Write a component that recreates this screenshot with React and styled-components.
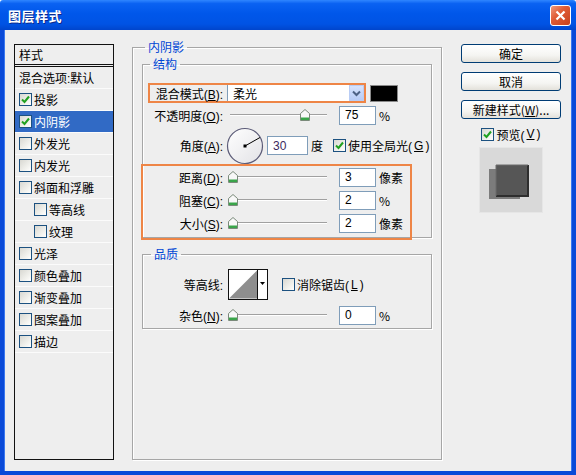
import styled, { createGlobalStyle } from 'styled-components';

const GlobalStyle = createGlobalStyle`
  html, body { margin: 0; padding: 0; background: #ffffff; }
  body {
    font-family: "Liberation Sans", "Noto Sans CJK SC", sans-serif;
    font-size: 12px;
    color: #000;
  }
  * { box-sizing: border-box; }
`;

const Window = styled.div`
  width: 576px;
  height: 475px;
  display: flex;
  flex-direction: column;
`;

const TitleBar = styled.div`
  height: 30px;
  flex: none;
  display: flex;
  align-items: center;
  justify-content: space-between;
  padding: 0 5px 0 8px;
  border-radius: 3px 3px 0 0;
  background: linear-gradient(to bottom, #2f86ff 0%, #0a62f2 12%, #0057ea 45%, #0053e4 80%, #0045cc 100%);
`;

const Title = styled.span`
  color: #fff;
  font-family: "Noto Sans CJK SC", sans-serif;
  font-weight: bold;
  font-size: 13px;
  text-shadow: 1px 1px 0 #0b2a8c;
  letter-spacing: 0.5px;
`;

const CloseButton = styled.div`
  width: 21px;
  height: 21px;
  border: 1px solid #fff;
  border-radius: 3px;
  background: linear-gradient(135deg, #f09a7e 0%, #e05c36 40%, #c7401c 100%);
  display: flex;
  align-items: center;
  justify-content: center;
`;

const Body = styled.div`
  flex: 1;
  display: flex;
  align-items: flex-start;
  padding: 14px 11px 0 10px;
  background: #eeeeee;
  border: 4px solid #0a4ad8;
  border-top: none;
  box-shadow: inset 1px 0 0 #3a78f0, inset -1px 0 0 #3a78f0;
`;

const StyleList = styled.div`
  width: 100px;
  height: 416px;
  flex: none;
  border: 1px solid #111;
`;

const ListHeader = styled.div`
  height: 22px;
  padding-left: 4px;
  display: flex;
  align-items: center;
  border-bottom: 3px double #111;
`;

const ListItem = styled.div`
  height: 22px;
  display: flex;
  align-items: center;
  gap: 2px;
  padding-left: ${p => (p.$indent ? 19 : 4)}px;
  border-bottom: 1px solid #fbfbfb;
  background: ${p => (p.$selected ? '#316ac5' : 'transparent')};
  color: ${p => (p.$selected ? '#fff' : '#000')};
`;

const Box = styled.span`
  width: 13px;
  height: 13px;
  flex: none;
  border: 1px solid #1c5180;
  background: linear-gradient(135deg, #d8d8d2 0%, #f4f4f0 70%, #ffffff 100%);
  display: inline-flex;
  align-items: center;
  justify-content: center;
`;

const Group = styled.fieldset`
  margin: ${p => p.$mt || 0}px 0 0 ${p => p.$ml || 0}px;
  padding: ${p => p.$pad};
  width: ${p => p.$w}px;
  height: ${p => (p.$h ? `${p.$h}px` : 'auto')};
  flex: none;
  border: 1px solid #a6a6a6;
  box-shadow: 1px 1px 0 #ffffff, inset 1px 1px 0 #ffffff;
  min-inline-size: 0;
`;

const Legend = styled.legend`
  margin-left: ${p => p.$ml}px;
  padding: 0 3px;
  line-height: 14px;
  color: #0046d5;
  font-family: "Noto Sans CJK SC", sans-serif;
`;

const Row = styled.div`
  display: flex;
  align-items: center;
  height: ${p => p.$h || 20}px;
  margin-top: ${p => p.$mt || 0}px;
`;

const Label = styled.span`
  width: ${p => p.$w || 80}px;
  flex: none;
  text-align: right;
  white-space: nowrap;
`;

const BlendFrame = styled.div`
  margin-left: 5px;
  width: 218px;
  height: 20px;
  border: 2px solid #ee8546;
  display: flex;
  align-items: center;
`;

const Select = styled.div`
  margin-left: 4px;
  flex: 1;
  height: 16px;
  background: #fff;
  border-left: 1px solid #7f9db9;
  display: flex;
  align-items: center;
  justify-content: space-between;
  padding-left: 5px;
  font-family: "Noto Sans CJK SC", sans-serif;
`;

const DropButton = styled.span`
  width: 15px;
  height: 16px;
  background: linear-gradient(to bottom, #d7e3fd, #b7cbf6);
  border: 1px solid #b9cdf5;
  display: flex;
  align-items: center;
  justify-content: center;
`;

const ColorSwatch = styled.div`
  margin-left: 4px;
  width: 28px;
  height: 17px;
  background: #000;
  border: 1px solid #8a8a8a;
`;

const SliderWrap = styled.div`
  position: relative;
  margin-left: 5px;
  width: 100px;
  height: 20px;
  flex: none;
  &::before {
    content: '';
    position: absolute;
    left: 2px;
    right: 1px;
    top: 9px;
    height: 1px;
    background: #a0a0a0;
    box-shadow: 0 1px 0 #ffffff;
  }
`;

const Thumb = styled.svg`
  position: absolute;
  top: 4px;
`;

const NumInput = styled.div`
  margin-left: ${p => p.$ml || 11}px;
  width: ${p => p.$w || 37}px;
  height: 19px;
  flex: none;
  background: #fff;
  border: 1px solid #7f9db9;
  padding-left: 5px;
  display: flex;
  align-items: center;
  color: ${p => p.$color || '#000'};
`;

const Unit = styled.span`
  margin-left: ${p => p.$ml || 3}px;
  font-family: "Noto Sans CJK SC", sans-serif;
`;

const CheckLabel = styled.span`
  display: inline-flex;
  align-items: center;
  gap: 2px;
  margin-left: ${p => p.$ml || 0}px;
  white-space: nowrap;
`;

const HighlightBox = styled.div`
  margin: 0 0 -3px -2px;
  width: 271px;
  border: 2px solid #ee8546;
  padding: 1px 0 5px;
  display: flex;
  flex-direction: column;
  gap: 3px;
  position: relative;
`;

const ContourBox = styled.div`
  margin-left: 5px;
  width: 40px;
  height: 31px;
  flex: none;
  border: 1px solid #111;
  background: #fff;
  display: flex;
`;

const SideColumn = styled.div`
  width: 100px;
  flex: none;
  margin-left: 19px;
  display: flex;
  flex-direction: column;
  align-items: center;
`;

const Button = styled.div`
  width: 100px;
  height: 19px;
  margin-bottom: 9px;
  border: 1px solid #003c74;
  border-radius: 3px;
  background: linear-gradient(to bottom, #ffffff 0%, #f5f5f2 60%, #e3e1da 100%);
  display: flex;
  align-items: center;
  justify-content: center;
  font-family: "Noto Sans CJK SC", sans-serif;
  white-space: nowrap;
`;

const PreviewRow = styled.div`
  margin-top: -1px;
  height: 14px;
  display: flex;
  align-items: center;
`;

const Preview = styled.div`
  margin-top: 6px;
  width: 64px;
  height: 66px;
  background: #d9d9d9;
  border: 1px solid #e6e6e6;
  display: flex;
  align-items: center;
  justify-content: center;
`;

const Check = ({ checked }) => (
  <Box>
    {checked && (
      <svg width="9" height="9" viewBox="0 0 9 9">
        <path d="M1 4.5 L3.5 7 L8 1.5" fill="none" stroke="#21a121" strokeWidth="2" />
      </svg>
    )}
  </Box>
);

const Slider = ({ value }) => (
  <SliderWrap>
    <Thumb width="10" height="12" viewBox="0 0 10 12" style={{ left: value * 96 }}>
      <path d="M0.5 4.5 L5 0.5 L9.5 4.5 V11.5 H0.5 Z" fill="#f8f8f8" stroke="#7a8a7a" />
      <rect x="1" y="8.5" width="8" height="2.5" fill="#3aa54a" />
    </Thumb>
  </SliderWrap>
);

// access key like "(B)", optionally followed by a colon
const Key = ({ k, colon = true }) => (
  <>
    (<u>{k}</u>){colon ? ':' : ''}
  </>
);

const Dial = () => (
  <svg width="38" height="38" viewBox="0 0 38 38" style={{ marginLeft: 3, flex: 'none' }}>
    <defs>
      <linearGradient id="dg" x1="0" y1="0" x2="1" y2="1">
        <stop offset="0" stopColor="#ffffff" />
        <stop offset="1" stopColor="#e2e2e6" />
      </linearGradient>
    </defs>
    <circle cx="19" cy="19" r="17.5" fill="url(#dg)" stroke="#5c5c78" strokeWidth="1.2" />
    <line x1="19" y1="19" x2="34" y2="10.5" stroke="#000" strokeWidth="1" />
    <rect x="17.5" y="17.5" width="3" height="3" fill="#000" />
  </svg>
);

const items = [
  { label: '混合选项:默认', box: false },
  { label: '投影', box: true, checked: true },
  { label: '内阴影', box: true, checked: true, selected: true },
  { label: '外发光', box: true },
  { label: '内发光', box: true },
  { label: '斜面和浮雕', box: true },
  { label: '等高线', box: true, indent: true },
  { label: '纹理', box: true, indent: true },
  { label: '光泽', box: true },
  { label: '颜色叠加', box: true },
  { label: '渐变叠加', box: true },
  { label: '图案叠加', box: true },
  { label: '描边', box: true },
];

export default function App() {
  return (
    <>
      <GlobalStyle />
      <Window>
        <TitleBar>
          <Title>图层样式</Title>
          <CloseButton>
            <svg width="11" height="11" viewBox="0 0 11 11">
              <path d="M1.5 1.5 L9.5 9.5 M9.5 1.5 L1.5 9.5" stroke="#fff" strokeWidth="2.2" />
            </svg>
          </CloseButton>
        </TitleBar>
        <Body>
          <StyleList>
            <ListHeader>样式</ListHeader>
            {items.map(it => (
              <ListItem key={it.label} $indent={it.indent} $selected={it.selected}>
                {it.box && <Check checked={it.checked} />}
                {it.label}
              </ListItem>
            ))}
          </StyleList>

          <Group $w={310} $h={420} $mt={-4} $ml={18} $pad="3px 9px 0 9px">
            <Legend $ml={3}>内阴影</Legend>

            <Group $w={290} $pad="12px 0 0 0">
              <Legend $ml={7}>结构</Legend>
              <Row>
                <BlendFrame>
                  <Label $w={73}>混合模式<Key k="B" /></Label>
                  <Select>
                    柔光
                    <DropButton>
                      <svg width="9" height="7" viewBox="0 0 9 7">
                        <path d="M1 1.5 L4.5 5 L8 1.5" fill="none" stroke="#4d6185" strokeWidth="2" />
                      </svg>
                    </DropButton>
                  </Select>
                </BlendFrame>
                <ColorSwatch />
              </Row>
              <Row $mt={2}>
                <Label>不透明度<Key k="O" /></Label>
                <Slider value={0.75} />
                <NumInput>75</NumInput>
                <Unit>%</Unit>
              </Row>
              <Row $mt={2} $h={37}>
                <Label>角度<Key k="A" /></Label>
                <Dial />
                <NumInput $ml={3} $w={41} $color="#3c2a60">30</NumInput>
                <Unit>度</Unit>
                <CheckLabel $ml={10}>
                  <Check checked />
                  使用全局光<Key k="G" colon={false} />
                </CheckLabel>
              </Row>
              <HighlightBox>
                <Row>
                  <Label>距离<Key k="D" /></Label>
                  <Slider value={0} />
                  <NumInput>3</NumInput>
                  <Unit>像素</Unit>
                </Row>
                <Row>
                  <Label>阻塞<Key k="C" /></Label>
                  <Slider value={0} />
                  <NumInput>2</NumInput>
                  <Unit>%</Unit>
                </Row>
                <Row>
                  <Label>大小<Key k="S" /></Label>
                  <Slider value={0} />
                  <NumInput>2</NumInput>
                  <Unit>像素</Unit>
                </Row>
              </HighlightBox>
            </Group>

            <Group $w={290} $mt={9} $pad="8px 0 3px 0">
              <Legend $ml={8}>品质</Legend>
              <Row $h={31}>
                <Label>等高线:</Label>
                <ContourBox>
                  <svg width="29" height="29" viewBox="0 0 29 29" style={{ borderRight: '1px solid #111', flex: 'none' }}>
                    <path d="M0 29 L29 0 L29 29 Z" fill="#8e8e8e" />
                  </svg>
                  <svg width="9" height="29" viewBox="0 0 9 29">
                    <path d="M2 12 L7 12 L4.5 15 Z" fill="#000" />
                  </svg>
                </ContourBox>
                <CheckLabel $ml={14}>
                  <Check />
                  消除锯齿<Key k="L" colon={false} />
                </CheckLabel>
              </Row>
              <Row $mt={5}>
                <Label>杂色<Key k="N" /></Label>
                <Slider value={0} />
                <NumInput>0</NumInput>
                <Unit>%</Unit>
              </Row>
            </Group>
          </Group>

          <SideColumn>
            <Button>确定</Button>
            <Button>取消</Button>
            <Button>新建样式<Key k="W" colon={false} />...</Button>
            <PreviewRow>
              <CheckLabel>
                <Check checked />
                预览<Key k="V" colon={false} />
              </CheckLabel>
            </PreviewRow>
            <Preview>
              <svg width="62" height="64" viewBox="0 0 62 64">
                <rect x="9" y="21" width="31" height="30" fill="#7c7c7c" />
                <rect x="16" y="17" width="32" height="31" fill="#565656" />
                <path d="M16 48 H48 V17" fill="none" stroke="#2e2e2e" strokeWidth="2" />
                <path d="M16 48 V17 H48" fill="none" stroke="#6a6a6a" strokeWidth="1" />
              </svg>
            </Preview>
          </SideColumn>
        </Body>
      </Window>
    </>
  );
}
